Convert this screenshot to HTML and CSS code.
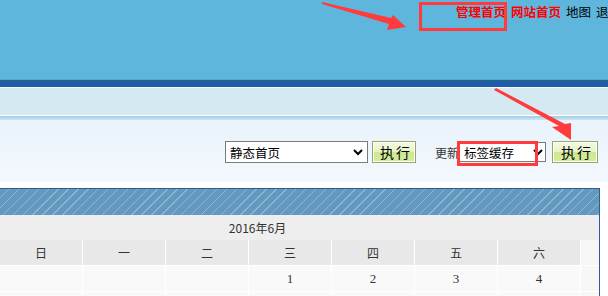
FILE: index.html
```html
<!DOCTYPE html>
<html lang="zh-CN">
<head>
    <meta charset="UTF-8">
    <title>管理首页</title>
    <link rel="stylesheet" href="styles.css">
</head>
<body>
    <div class="page">
        <div class="header">
            <div class="toplinks">
                <a class="hot">管理首页</a>
                <a class="hot">网站首页</a>
                <a>地图</a>
                <a>退出</a>
            </div>
        </div>
        <div class="rule"></div>
        <div class="subbar"></div>
        <div class="stripe"></div>

        <div class="toolbar">
            <div class="select-wrap first">
                <select><option>静态首页</option></select>
                <svg class="chev" width="10" height="7" viewBox="0 0 10 7"><polyline points="1,1 5,5 9,1" fill="none" stroke="#000" stroke-width="2"/></svg>
            </div>
            <button class="btn first">执行</button>
            <span class="label">更新</span>
            <div class="select-wrap second">
                <select><option>标签缓存</option></select>
                <svg class="chev" width="10" height="7" viewBox="0 0 10 7"><polyline points="1,1 5,5 9,1" fill="none" stroke="#000" stroke-width="2"/></svg>
            </div>
            <button class="btn second">执行</button>
        </div>

        <div class="calendar">
            <div class="cal-bar"></div>
            <div class="cal-title">2016年6月</div>
            <div class="cal-grid">
                <div class="wd">日</div><div class="wd">一</div><div class="wd">二</div><div class="wd">三</div><div class="wd">四</div><div class="wd">五</div><div class="wd">六</div><div class="pad"></div>
                <div class="day"></div><div class="day"></div><div class="day"></div><div class="day">1</div><div class="day">2</div><div class="day">3</div><div class="day">4</div><div class="pad"></div>
                <div class="day"></div><div class="day"></div><div class="day"></div><div class="day"></div><div class="day"></div><div class="day"></div><div class="day"></div><div class="pad"></div>
            </div>
        </div>

        <!-- red annotation marks drawn over the screenshot -->
        <svg class="marks" width="608" height="296" viewBox="0 0 608 296">
            <polygon points="322,2 391,18 393,15 406,27 387,30 389,24 322,4" fill="#ff3b3b"/>
            <rect x="420.5" y="3.5" width="85" height="26" fill="none" stroke="#ff3b3b" stroke-width="3"/>
            <polygon points="496,88 565,124 571,123 571,140 552,127 559,126 494,90" fill="#ff3b3b"/>
            <rect x="458.5" y="142.5" width="78" height="22" fill="none" stroke="#ff3b3b" stroke-width="3"/>
        </svg>
    </div>
</body>
</html>
```

FILE: styles.css
```css
body, html {
    margin: 0;
    padding: 0;
    background: #ffffff;
    font-family: "Noto Sans CJK SC", "Liberation Sans", sans-serif;
    font-size: 12px;
    color: #333333;
}

.page {
    position: relative;
    width: 608px;
    height: 296px;
    overflow: hidden;
}

.header {
    height: 79px;
    background: #5eb6dd;
    overflow: hidden;
}

.toplinks {
    display: flex;
    white-space: nowrap;
    padding: 5px 0 0 456px;
    line-height: 14px;
    font-size: 12.5px;
}

.toplinks a {
    color: #000000;
    margin-right: 5px;
    flex-shrink: 0;
}

.toplinks a.hot {
    color: #ff0000;
    font-weight: 700;
    margin-right: 5px;
}

.rule {
    height: 7px;
    background: #1d5dac;
    border-top: 1px solid #50a9d8;
    box-shadow: inset 0 1px 0 #2b6474;
}

.subbar {
    height: 27px;
    background: #d4e9f1;
    border-top: 1px solid #ffffff;
    border-bottom: 1px solid #ffffff;
}

.stripe {
    height: 4px;
    background: linear-gradient(#9ccce3, #cde6f1);
}

.toolbar {
    display: flex;
    justify-content: flex-end;
    align-items: center;
    height: 22px;
    padding: 21px 10px 19px 0;
    background: linear-gradient(#e9f3fb, #f3f8fd);
}

.select-wrap {
    position: relative;
    height: 22px;
}

.select-wrap.first {
    width: 143px;
    margin-right: 4px;
}

.select-wrap.second {
    width: 87px;
    height: 20px;
    margin-right: 6px;
}

.select-wrap select {
    appearance: none;
    -webkit-appearance: none;
    box-sizing: border-box;
    width: 100%;
    height: 100%;
    margin: 0;
    padding: 0 0 0 4px;
    border: 1px solid #7a7a7a;
    border-radius: 0;
    background: #ffffff;
    font-family: "Noto Sans CJK SC", sans-serif;
    font-size: 12.5px;
    color: #000000;
}

.chev {
    position: absolute;
    top: 50%;
    right: 5px;
    margin-top: -3px;
}

.select-wrap.second .chev {
    right: 3px;
}

.btn {
    box-sizing: border-box;
    height: 22px;
    margin: 0;
    padding: 0 0 0 4px;
    border: 1px solid #9aa760;
    border-radius: 0;
    box-shadow: inset 0 0 0 1px #ffffff;
    background: linear-gradient(#f5fae6 0%, #e6f2c4 50%, #cde88f 52%, #d4eca0 100%);
    font-family: "Noto Sans CJK SC", sans-serif;
    font-size: 14px;
    letter-spacing: 2px;
    line-height: 18px;
    color: #000000;
}

.btn.first {
    width: 44px;
    margin-right: 19px;
}

.btn.second {
    width: 46px;
}

.label {
    width: 24px;
    font-size: 12px;
    color: #333333;
    white-space: nowrap;
}

.calendar {
    margin: 6px 0 0 -1px;
    width: 599px;
    border: 1px solid #2c5d96;
    border-bottom: none;
    background: #ffffff;
}

.cal-bar {
    height: 26px;
    background: repeating-linear-gradient(135deg, #6399bf 0, #6399bf 6px, #8cb6d4 6px, #8cb6d4 7px);
}

.cal-title {
    height: 25px;
    line-height: 25px;
    padding-right: 84px;
    text-align: center;
    background: #eeeeee;
    color: #333333;
}

.cal-grid {
    display: grid;
    grid-template-columns: repeat(7, 82px) 1fr;
    grid-auto-rows: 25px;
    gap: 1px;
    background: #ffffff;
}

.cal-grid > div {
    display: flex;
    align-items: center;
    justify-content: center;
}

.wd {
    background: #e8e8e8;
    color: #333333;
}

.day {
    background: #f9f9f9;
    font-family: "Liberation Serif", serif;
    font-size: 13px;
    color: #333333;
}

.pad {
    background: #f7f7f7;
}

.marks {
    position: absolute;
    top: 0;
    left: 0;
    pointer-events: none;
}
```
